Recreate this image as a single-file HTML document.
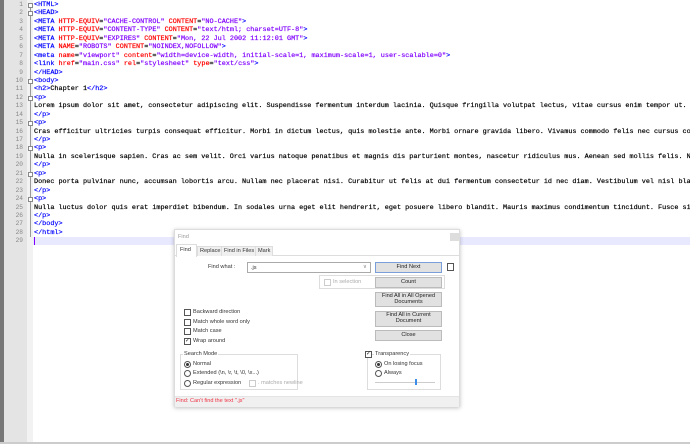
<!DOCTYPE html>
<html><head><style>
*{margin:0;padding:0;box-sizing:border-box}
body{width:690px;height:444px;overflow:hidden;background:#fff;position:relative;font-family:"Liberation Sans",sans-serif}
.gut{position:absolute;left:0;top:0;width:4px;height:444px;background:#777}
.num{position:absolute;left:4px;top:0;width:23px;height:444px;background:#e4e4e4}
.fold{position:absolute;left:27px;top:0;width:6px;height:444px;background:#f2f2f2}
.code{position:absolute;left:34px;top:1px;font-family:"Liberation Mono",monospace;font-size:6.8px;line-height:8.43px;white-space:pre;color:#000;-webkit-text-stroke:0.2px}
.nums{position:absolute;left:4px;top:1px;width:19px;text-align:right;font-family:"Liberation Mono",monospace;font-size:6.2px;line-height:8.43px;color:#888;white-space:pre}
.t{color:#0000ff}.a{color:#ff0000}.v{color:#8000ff}
.cur{position:absolute;left:33px;top:237px;width:657px;height:8px;background:#e8e8ff}
.caret{position:absolute;left:34px;top:237px;width:1px;height:8px;background:#8000ff}
.fb{position:absolute;left:28px;width:5px;height:5px;border:1px solid #888;background:#fff}
.fl{position:absolute;left:30px;width:1px;background:#999}
.dlg{position:absolute;left:174px;top:229px;width:286px;height:178px;background:#fff;border:1px solid #ddd;box-shadow:0 1px 4px rgba(0,0,0,.25);font-size:5.6px;color:#333}
.ab{position:absolute}
.btn{position:absolute;left:200px;width:67px;background:#e1e1e1;border:1px solid #bbb;text-align:center;font-size:5.6px;line-height:5.8px;display:flex;align-items:center;justify-content:center;color:#222}
.cb{position:absolute;width:7px;height:7px;border:1px solid #555;background:#fff}
.rd{position:absolute;width:7px;height:7px;border:1px solid #555;border-radius:50%;background:#fff}
.lbl{position:absolute;white-space:nowrap}
.grp{position:absolute;border:1px solid #ddd}
</style></head><body>
<div class="gut"></div><div class="num"></div><div class="fold"></div>
<div class="fl" style="top:7px;height:230px"></div>
<div class="fb" style="top:3px"></div><div class="fb" style="top:11px"></div><div class="fb" style="top:79px"></div><div class="fb" style="top:96px"></div><div class="fb" style="top:121px"></div><div class="fb" style="top:146px"></div><div class="fb" style="top:172px"></div><div class="fb" style="top:197px"></div>
<div class="cur"></div><div class="caret"></div>
<div class="nums">1
2
3
4
5
6
7
8
9
10
11
12
13
14
15
16
17
18
19
20
21
22
23
24
25
26
27
28
29</div>
<div class="code"><span class="t">&lt;HTML&gt;</span>
<span class="t">&lt;HEAD&gt;</span>
<span class="t">&lt;META</span> <span class="a">HTTP-EQUIV</span>=<span class="v">"CACHE-CONTROL"</span> <span class="a">CONTENT</span>=<span class="v">"NO-CACHE"</span><span class="t">&gt;</span>
<span class="t">&lt;META</span> <span class="a">HTTP-EQUIV</span>=<span class="v">"CONTENT-TYPE"</span> <span class="a">CONTENT</span>=<span class="v">"text/html; charset=UTF-8"</span><span class="t">&gt;</span>
<span class="t">&lt;META</span> <span class="a">HTTP-EQUIV</span>=<span class="v">"EXPIRES"</span> <span class="a">CONTENT</span>=<span class="v">"Mon, 22 Jul 2002 11:12:01 GMT"</span><span class="t">&gt;</span>
<span class="t">&lt;META</span> <span class="a">NAME</span>=<span class="v">"ROBOTS"</span> <span class="a">CONTENT</span>=<span class="v">"NOINDEX,NOFOLLOW"</span><span class="t">&gt;</span>
<span class="t">&lt;meta</span> <span class="a">name</span>=<span class="v">"viewport"</span> <span class="a">content</span>=<span class="v">"width=device-width, initial-scale=1, maximum-scale=1, user-scalable=0"</span><span class="t">&gt;</span>
<span class="t">&lt;link</span> <span class="a">href</span>=<span class="v">"main.css"</span> <span class="a">rel</span>=<span class="v">"stylesheet"</span> <span class="a">type</span>=<span class="v">"text/css"</span><span class="t">&gt;</span>
<span class="t">&lt;/HEAD&gt;</span>
<span class="t">&lt;body&gt;</span>
<span class="t">&lt;h2&gt;</span>Chapter 1<span class="t">&lt;/h2&gt;</span>
<span class="t">&lt;p&gt;</span>
Lorem ipsum dolor sit amet, consectetur adipiscing elit. Suspendisse fermentum interdum lacinia. Quisque fringilla volutpat lectus, vitae cursus enim tempor ut. Fusce
<span class="t">&lt;/p&gt;</span>
<span class="t">&lt;p&gt;</span>
Cras efficitur ultricies turpis consequat efficitur. Morbi in dictum lectus, quis molestie ante. Morbi ornare gravida libero. Vivamus commodo felis nec cursus consec
<span class="t">&lt;/p&gt;</span>
<span class="t">&lt;p&gt;</span>
Nulla in scelerisque sapien. Cras ac sem velit. Orci varius natoque penatibus et magnis dis parturient montes, nascetur ridiculus mus. Aenean sed mollis felis. Nam s
<span class="t">&lt;/p&gt;</span>
<span class="t">&lt;p&gt;</span>
Donec porta pulvinar nunc, accumsan lobortis arcu. Nullam nec placerat nisi. Curabitur ut felis at dui fermentum consectetur id nec diam. Vestibulum vel nisl blandit
<span class="t">&lt;/p&gt;</span>
<span class="t">&lt;p&gt;</span>
Nulla luctus dolor quis erat imperdiet bibendum. In sodales urna eget elit hendrerit, eget posuere libero blandit. Mauris maximus condimentum tincidunt. Fusce sit am
<span class="t">&lt;/p&gt;</span>
<span class="t">&lt;/body&gt;</span>
<span class="t">&lt;/html&gt;</span>
</div>
<div class="dlg">
 <div class="lbl" style="left:3px;top:4px;color:#999">Find</div>
 <div class="ab" style="left:275px;top:3px;width:9px;height:8px;background:#ddd"></div>
 <div class="ab" style="left:0;top:14px;width:284px;height:12px;border-bottom:1px solid #ddd"></div>
 <div class="lbl" style="left:1px;top:14px;width:21px;height:13px;background:#fff;border:1px solid #ddd;border-bottom:none;padding:2px 3px">Find</div>
 <div class="lbl" style="left:22px;top:16px;height:10px;border:1px solid #ddd;border-bottom:none;padding:1px 2px;background:#f0f0f0">Replace</div>
 <div class="lbl" style="left:46px;top:16px;height:10px;border:1px solid #ddd;border-bottom:none;padding:1px 2px;background:#f0f0f0">Find in Files</div>
 <div class="lbl" style="left:80px;top:16px;height:10px;border:1px solid #ddd;border-bottom:none;padding:1px 2px;background:#f0f0f0">Mark</div>
 <div class="lbl" style="left:33px;top:34px">Find what :</div>
 <div class="ab" style="left:72px;top:32px;width:124px;height:11px;border:1px solid #aaa;padding:2px 3px">.js<span style="position:absolute;right:3px;top:1px;color:#888">&#x2228;</span></div>
 <div class="btn" style="top:32px;height:11px;border-color:#7a9ed8">Find Next</div>
 <div class="ab" style="left:272px;top:33px;width:7px;height:8px;border:1px solid #555"></div>
 <div class="grp" style="left:144px;top:45px;width:126px;height:14px"></div>
 <div class="cb" style="left:149px;top:49px;border-color:#ccc"></div><div class="lbl" style="left:158px;top:49px;color:#aaa">In selection</div>
 <div class="btn" style="top:47px;height:11px">Count</div>
 <div class="btn" style="top:62px;height:15px">Find All in All Opened<br>Documents</div>
 <div class="btn" style="top:81px;height:16px">Find All in Current<br>Document</div>
 <div class="btn" style="top:100px;height:11px">Close</div>
 <div class="cb" style="left:9px;top:79px"></div><div class="lbl" style="left:18px;top:79px">Backward direction</div>
 <div class="cb" style="left:9px;top:89px"></div><div class="lbl" style="left:18px;top:89px">Match whole word only</div>
 <div class="cb" style="left:9px;top:98px"></div><div class="lbl" style="left:18px;top:98px">Match case</div>
 <div class="cb" style="left:9px;top:108px;font-size:6px;line-height:5px;text-align:center">&#x2713;</div><div class="lbl" style="left:18px;top:108px">Wrap around</div>
 <div class="grp" style="left:5px;top:124px;width:118px;height:36px"></div>
 <div class="lbl" style="left:8px;top:121px;background:#fff;padding:0 1px">Search Mode</div>
 <div class="rd" style="left:9px;top:131px"><div style="margin:1px;width:3px;height:3px;border-radius:50%;background:#333"></div></div><div class="lbl" style="left:18px;top:131px">Normal</div>
 <div class="rd" style="left:9px;top:140px"></div><div class="lbl" style="left:18px;top:140px">Extended (\n, \r, \t, \0, \x...)</div>
 <div class="rd" style="left:9px;top:150px"></div><div class="lbl" style="left:18px;top:150px">Regular expression</div>
 <div class="cb" style="left:74px;top:150px;border-color:#ccc"></div><div class="lbl" style="left:83px;top:150px;color:#aaa">. matches newline</div>
 <div class="grp" style="left:192px;top:124px;width:74px;height:36px"></div>
 <div class="cb" style="left:190px;top:121px;font-size:6px;line-height:5px;text-align:center">&#x2713;</div><div class="lbl" style="left:199px;top:121px;background:#fff;padding:0 1px">Transparency</div>
 <div class="rd" style="left:200px;top:131px"><div style="margin:1px;width:3px;height:3px;border-radius:50%;background:#333"></div></div><div class="lbl" style="left:209px;top:131px">On losing focus</div>
 <div class="rd" style="left:200px;top:140px"></div><div class="lbl" style="left:209px;top:140px">Always</div>
 <div class="ab" style="left:200px;top:152px;width:60px;height:1px;background:#ccc"></div>
 <div class="ab" style="left:240px;top:149px;width:2px;height:6px;background:#3a8ee6"></div>
 <div class="ab" style="left:0;top:166px;width:284px;height:11px;background:#f0f0f0;border-top:1px solid #e4e4e4"></div>
 <div class="lbl" style="left:1px;top:168px;color:#ee3344">Find: Can't find the text ".js"</div>
</div>
<div class="ab" style="left:0;top:442px;width:690px;height:2px;background:#ccc"></div>
</body></html>
